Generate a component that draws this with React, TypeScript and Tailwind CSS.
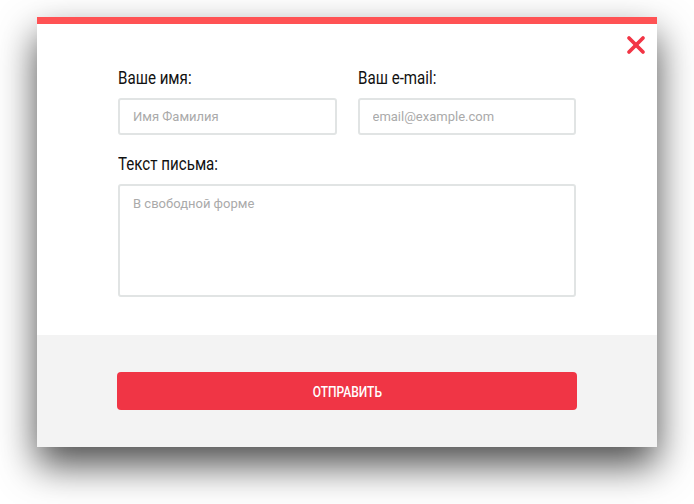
import { X } from "lucide-react"

const label =
  "block origin-left scale-x-[0.84] text-[18px] leading-5 text-[#111] mb-[10px] whitespace-nowrap font-['Roboto',sans-serif]"
const field =
  "w-full border-2 border-[#e1e4e4] rounded-[3px] px-[13px] text-[13px] text-[#333] placeholder-[#aaaaaa] outline-none font-['Roboto',sans-serif] bg-white"

export default function App() {
  return (
    <div className="w-[694px] h-[504px] bg-white pt-[17px] pl-[37px]">
      <div className="relative w-[620px] h-[430px] flex flex-col bg-white shadow-[0_18px_36px_rgba(0,0,0,0.7)]">
        <div className="h-[7px] bg-[#ff5254]" />
        <button className="absolute right-[7px] top-[14px] text-[#f23545]">
          <X className="h-[28px] w-[28px]" strokeWidth={3.2} />
        </button>

        <form className="flex-1 px-[81px] pt-[44px]">
          <div className="grid grid-cols-2 gap-[21px]">
            <div>
              <label className={label}>Ваше имя:</label>
              <input className={`${field} h-[37px]`} placeholder="Имя Фамилия" />
            </div>
            <div>
              <label className={label}>Ваш e-mail:</label>
              <input className={`${field} h-[37px]`} placeholder="email@example.com" />
            </div>
          </div>
          <div className="mt-[19px]">
            <label className={label}>Текст письма:</label>
            <textarea className={`${field} h-[113px] py-[8px] resize-none`} placeholder="В свободной форме" />
          </div>
        </form>

        <div className="h-[112px] bg-[#f3f3f3] px-[80px] pt-[37px]">
          <button className="w-full h-[38px] rounded-[4px] bg-[#f03545] text-white">
            <span className="inline-block scale-x-[0.8] text-[15px] font-medium font-['Roboto',sans-serif]">
              ОТПРАВИТЬ
            </span>
          </button>
        </div>
      </div>
    </div>
  )
}
